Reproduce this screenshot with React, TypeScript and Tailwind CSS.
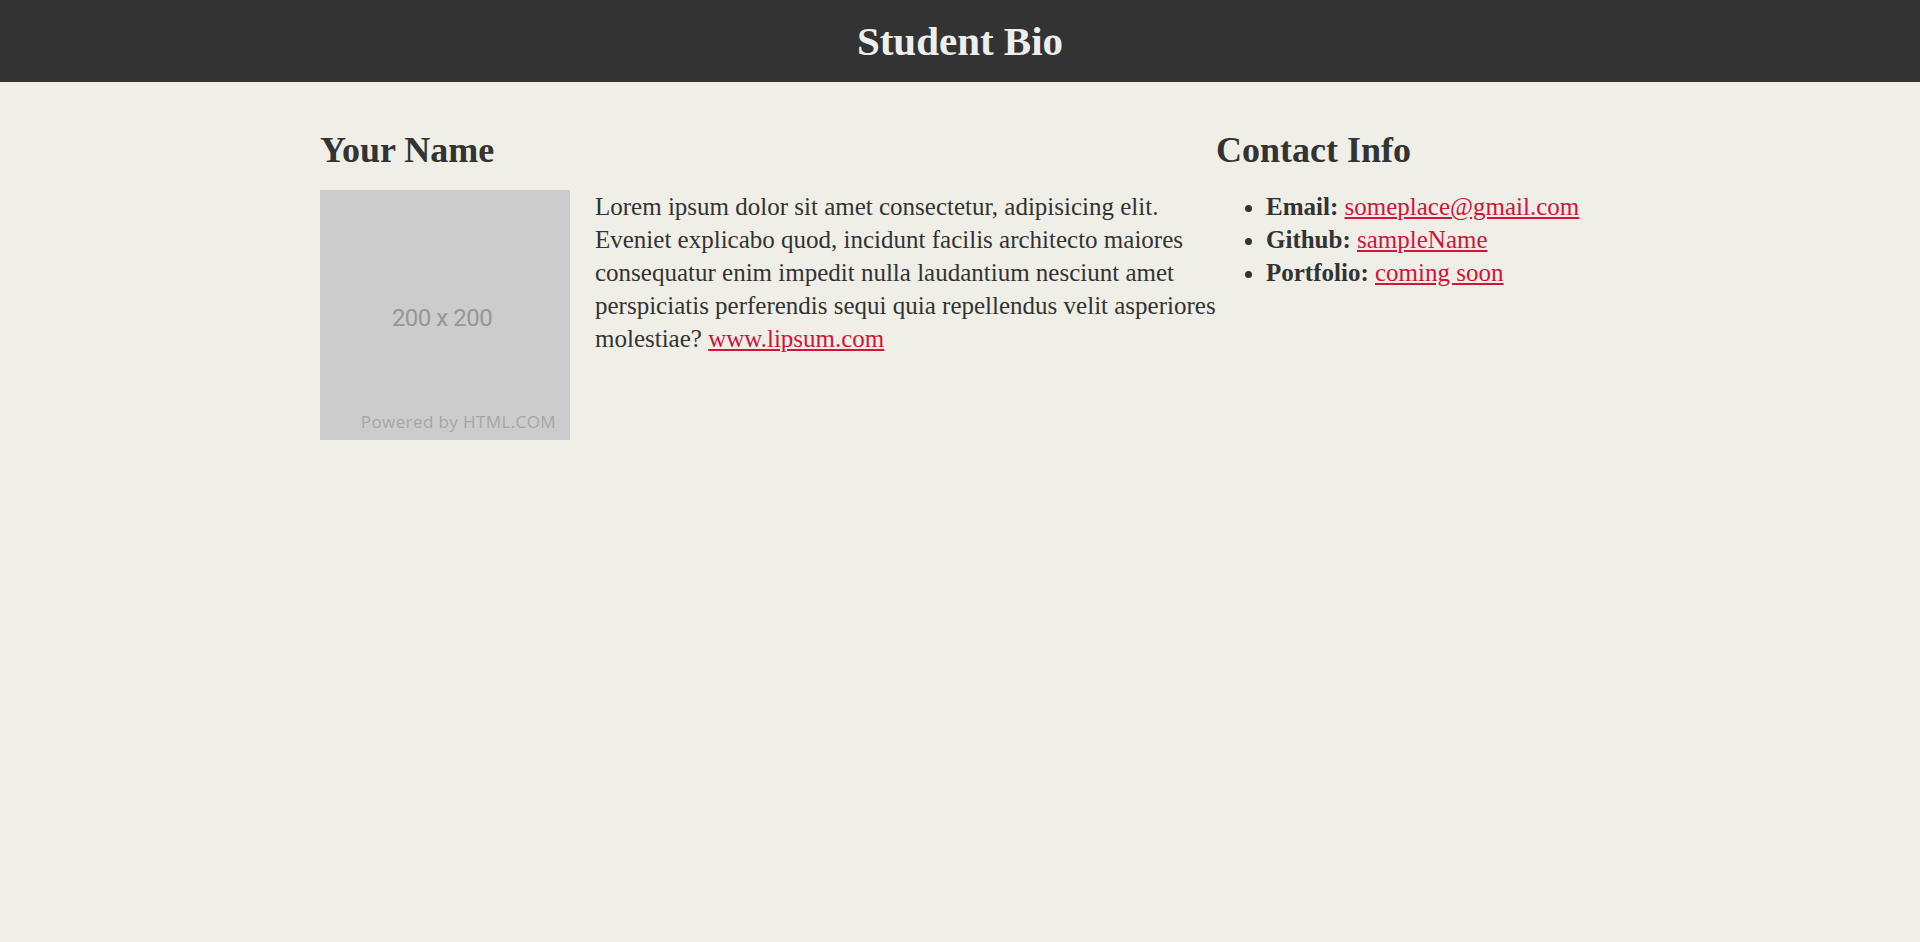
const contacts = [
  { label: "Email:", text: "someplace@gmail.com" },
  { label: "Github:", text: "sampleName" },
  { label: "Portfolio:", text: "coming soon" },
];

function Placeholder() {
  return (
    <div className="relative h-[250px] w-[250px] shrink-0 bg-[#cccccc]">
      <div className="flex h-full items-center justify-center pt-[5px] pr-[6px] font-['Roboto',sans-serif] text-[24px] tracking-[-0.5px] text-[#969696]">
        200 x 200
      </div>
      <span className="absolute bottom-[6px] right-[14px] font-['Open_Sans',sans-serif] text-[17px] tracking-[0.4px] text-[#a6a6a6]">
        Powered by HTML.COM
      </span>
    </div>
  );
}

export default function App() {
  return (
    <div className="min-h-screen bg-[#efeee7] font-['Liberation_Serif',serif] text-[#333333]">
      <header className="flex h-[82px] items-center justify-center bg-[#333333]">
        <h1 className="text-[41px] font-bold leading-none text-[#eeeeee]">Student Bio</h1>
      </header>

      <main className="mx-auto flex w-[1280px] pt-[47px]">
        <section className="w-[896px]">
          <h2 className="text-[36px] font-bold leading-[42px]">Your Name</h2>
          <div className="mt-[19px] flex gap-[25px]">
            <Placeholder />
            <p className="text-[25px] leading-[33px]">
              Lorem ipsum dolor sit amet consectetur, adipisicing elit. Eveniet explicabo quod, incidunt
              facilis architecto maiores consequatur enim impedit nulla laudantium nesciunt amet
              perspiciatis perferendis sequi quia repellendus velit asperiores molestiae?{" "}
              <a href="#" className="text-[#d41338] underline">
                www.lipsum.com
              </a>
            </p>
          </div>
        </section>

        <section className="flex-1">
          <h2 className="text-[36px] font-bold leading-[42px]">Contact Info</h2>
          <ul className="mt-[19px] list-disc pl-[50px] text-[25px] leading-[33px]">
            {contacts.map((c) => (
              <li key={c.label}>
                <strong className="font-bold">{c.label}</strong>{" "}
                <a href="#" className="text-[#d41338] underline">
                  {c.text}
                </a>
              </li>
            ))}
          </ul>
        </section>
      </main>
    </div>
  );
}
